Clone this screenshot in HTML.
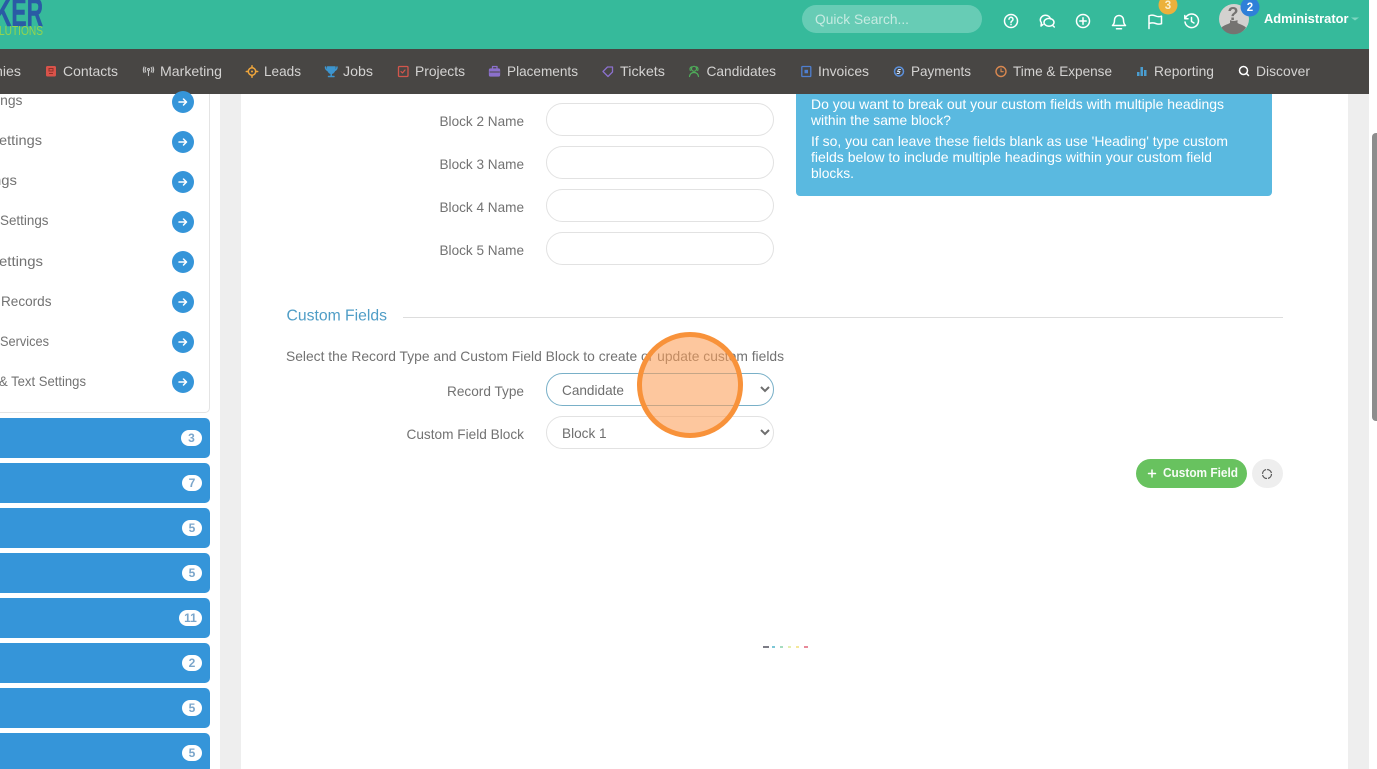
<!DOCTYPE html>
<html lang="en">
<head>
<meta charset="utf-8">
<title>Custom Fields</title>
<style>
html,body{margin:0;padding:0;width:1377px;height:769px;overflow:hidden;background:#fff;font-family:"Liberation Sans",sans-serif}
.a{position:absolute}
#stage{position:relative;width:1377px;height:769px;overflow:hidden}
input,select{position:absolute;left:546px;width:228px;height:33px;box-sizing:border-box;border:1px solid #e2e2e2;border-radius:17px;background:#fff;color:#6e6e6e;font:13.6px "Liberation Sans",sans-serif;padding:1px 6px 0 11px;margin:0;outline:0}
svg{position:absolute;left:0;top:0}
text{font-family:"Liberation Sans",sans-serif}
.bar{position:absolute;left:-10px;width:220px;height:40px;background:#3595d9;border-radius:5px}
</style>
</head>
<body>
<div id="stage">
<div class="a" style="left:220px;top:94px;width:21px;height:675px;background:#eeeeee"></div>
<div class="a" style="left:1348px;top:94px;width:21px;height:675px;background:#eeeeee"></div>
<div class="a" style="left:1372px;top:133px;width:5px;height:288px;background:#8d8d8d;border-radius:4px 0 0 4px"></div>
<div class="a" style="left:-10px;top:80px;width:218px;height:331px;background:#fff;border:1px solid #e4e4e4;border-radius:5px"></div>
<div class="bar" style="top:418px"></div>
<div class="bar" style="top:463px"></div>
<div class="bar" style="top:508px"></div>
<div class="bar" style="top:553px"></div>
<div class="bar" style="top:598px"></div>
<div class="bar" style="top:643px"></div>
<div class="bar" style="top:688px"></div>
<div class="bar" style="top:733px"></div>

<div class="a" style="left:796px;top:80px;width:476px;height:116px;background:#5ab9e0;border-radius:4px"></div>

<input type="text" style="top:103px">
<input type="text" style="top:146px">
<input type="text" style="top:189px">
<input type="text" style="top:232px">
<select style="top:373px;border-color:#79b0c8"><option>Candidate</option></select>
<select style="top:416px"><option>Block 1</option></select>

<div class="a" style="left:1136px;top:459px;width:111px;height:29px;background:#68c25f;border-radius:15px"></div>
<div class="a" style="left:1252px;top:459px;width:31px;height:29px;background:#eeeeee;border-radius:15px"></div>
<div class="a" style="left:403px;top:317px;width:880px;height:1px;background:#dddddd"></div>

<div class="a" style="left:0;top:0;width:1369px;height:49px;background:#36ba9b"></div>
<div class="a" style="left:0;top:49px;width:1369px;height:45px;background:#484644"></div>
<div class="a" style="left:802px;top:5px;width:180px;height:28px;background:#67ccb5;border-radius:14px"></div>

<svg width="1377" height="769" viewBox="0 0 1377 769" xmlns="http://www.w3.org/2000/svg">
<!-- logo -->
<text x="-5" y="26" font-size="40" font-weight="700" fill="#2a5ba5" stroke="#2a5ba5" stroke-width=".6" textLength="48" lengthAdjust="spacingAndGlyphs">KER</text>
<text x="-1" y="35" font-size="12.500" fill="#93d44f" textLength="44" lengthAdjust="spacingAndGlyphs">LUTIONS</text>

<!-- top search + user -->
<text x="815" y="24" font-size="14" fill="#c6ebe2" textLength="94" lengthAdjust="spacingAndGlyphs">Quick Search...</text>
<g fill="none" stroke="#fff" stroke-width="1.500" stroke-linecap="round" stroke-linejoin="round">
  <circle cx="1011" cy="21" r="6.500"/>
  <path d="M1009 19.200a2 2 0 1 1 3 1.800c-.7.400-1 .8-1 1.500"/><path d="M1011 24.400v.2"/>
  <path d="M1043 24.500l-2 1.500.4-3.200c-.8-1-1.100-1.800-1.100-2.800 0-2.700 2.400-4.700 5.200-4.700 2.500 0 4.500 1.500 5 3.600"/>
  <ellipse cx="1049" cy="22.300" rx="5" ry="3.900"/>
  <path d="M1052.500 25.300l1.800 1.700"/>
  <circle cx="1083" cy="21" r="6.500"/>
  <path d="M1083 17.800v6.400M1079.800 21h6.400"/>
  <path d="M1112.500 25.500c1.500-1.200 2-2.500 2-5.500a4.500 4.500 0 0 1 9 0c0 3 .5 4.300 2 5.500z"/>
  <path d="M1116.500 28.800h5"/>
  <path d="M1149 28.500V15.800c2.800-1.300 5-.6 6.700.2s3.300 1 5.800.2v7.500c-2.500.9-4 .5-5.800-.2s-3.900-1-6.700 0"/>
  <path d="M1185.500 18a6.800 6.800 0 1 1-.5 4"/><path d="M1184.800 15.500v3.200h3.200"/>
  <path d="M1191.500 17.500v4l2.500 1.500"/>
</g>
<circle cx="1168" cy="5" r="9.500" fill="#ecb13c"/>
<text x="1168" y="9" font-size="11.500" font-weight="700" fill="#fbeecb" text-anchor="middle">3</text>
<circle cx="1234" cy="19" r="15" fill="#d3d1cf"/>
<path d="M1221.500 27.500c2.500-2.500 6-3 8.500-4.500v-3c1.500 1.200 6 1.200 7.500 0v3c2.500 1.500 6 2 8.500 4.500-5.500 9-19 9-24.500 0z" fill="#757371"/>
<text x="1233" y="20" font-size="18" font-weight="700" fill="#757371" text-anchor="middle">?</text>
<circle cx="1250" cy="7" r="9.500" fill="#2f80d8"/>
<text x="1250" y="11" font-size="11.500" font-weight="700" fill="#fff" text-anchor="middle">2</text>
<text x="1264" y="23" font-size="13" font-weight="700" fill="#fff" textLength="84.500" lengthAdjust="spacingAndGlyphs">Administrator</text>
<path d="M1351 17.500h8l-4 3z" fill="#7fd6c1"/>

<!-- nav text -->
<g font-size="14" fill="#d4d3d2">
<text x="-5" y="76" textLength="26" lengthAdjust="spacingAndGlyphs">hies</text>
<text x="63" y="76" textLength="55" lengthAdjust="spacingAndGlyphs">Contacts</text>
<text x="160" y="76" textLength="62" lengthAdjust="spacingAndGlyphs">Marketing</text>
<text x="264" y="76" textLength="37" lengthAdjust="spacingAndGlyphs">Leads</text>
<text x="343" y="76" textLength="30" lengthAdjust="spacingAndGlyphs">Jobs</text>
<text x="415" y="76" textLength="50" lengthAdjust="spacingAndGlyphs">Projects</text>
<text x="507" y="76" textLength="71" lengthAdjust="spacingAndGlyphs">Placements</text>
<text x="620" y="76" textLength="45" lengthAdjust="spacingAndGlyphs">Tickets</text>
<text x="706.500" y="76" textLength="69.500" lengthAdjust="spacingAndGlyphs">Candidates</text>
<text x="818" y="76" textLength="51" lengthAdjust="spacingAndGlyphs">Invoices</text>
<text x="911" y="76" textLength="60" lengthAdjust="spacingAndGlyphs">Payments</text>
<text x="1013" y="76" textLength="99" lengthAdjust="spacingAndGlyphs">Time &amp; Expense</text>
<text x="1154" y="76" textLength="60" lengthAdjust="spacingAndGlyphs">Reporting</text>
<text x="1256" y="76" textLength="54" lengthAdjust="spacingAndGlyphs">Discover</text>
</g>
<!-- nav icons -->
<rect x="46" y="66" width="10" height="10.500" rx="1.500" fill="#d9534a"/>
<path d="M49 68.500h4v2.500h-4zM49 73.500h4" stroke="#8f3029" stroke-width="1" fill="none"/>
<g fill="none" stroke-linecap="round" stroke-linejoin="round">
  <g stroke="#c9c9c9" stroke-width="1.100">
    <circle cx="148.500" cy="69.500" r="1"/><path d="M148.500 71v4.500M145.800 67.500c-1 1.500-1 3 0 4.500M151.200 67.500c1 1.500 1 3 0 4.500M144 67c-1 2-1 3.500 0 5.500M153 67c1 2 1 3.500 0 5.500"/>
  </g>
  <g stroke="#f0a63c" stroke-width="1.500">
    <circle cx="252" cy="71.500" r="3.700"/><path d="M252 65.800v2M252 75.200v2M246.300 71.500h2M255.700 71.500h2"/>
  </g>
  <circle cx="252" cy="71.500" r="1" fill="#f0a63c"/>
  <g stroke="#3d95cf" stroke-width="1.500">
    <path d="M327.500 67h7.500c0 4-1 6-3.700 6.500-2.800-.5-3.800-2.500-3.800-6.500z" fill="#3d95cf"/>
    <path d="M325.500 67c0 2 .7 3 2.500 3.500M337 67c0 2-.7 3-2.500 3.500M331.200 73.500V76M328.500 76.500h5.500"/>
  </g>
  <rect x="398.500" y="66.500" width="9.500" height="10" rx="1" stroke="#d3564c" stroke-width="1.300"/>
  <path d="M401 71.500l1.500 1.500 2.500-3" stroke="#d3564c" stroke-width="1.200"/>
  <g stroke="#8b70cc" stroke-width="1.300">
    <rect x="489.500" y="69" width="10" height="7" rx="1" fill="#8b70cc"/>
    <path d="M492.500 69v-2.500h4.500v2.500"/>
  </g>
  <path d="M490 72h9.500" stroke="#484644" stroke-width="1"/>
  <path d="M603 71.500l4.500-4.500h5v5l-4.500 4.500z" stroke="#8b70cc" stroke-width="1.300"/>
  <g stroke="#4fae5a" stroke-width="1.200">
    <circle cx="694" cy="68.800" r="2.500"/>
    <path d="M689.500 76.500c.5-3 2.300-4 4.500-4s4 1 4.500 4"/>
    <path d="M690.300 70.500c-1-2 .3-3.500 1.300-3.700M697.700 70.500c1-2-.3-3.500-1.300-3.700"/>
  </g>
  <rect x="801.800" y="66.500" width="9" height="10" rx=".8" stroke="#4f7fd0" stroke-width="1.300"/>
  <rect x="804.500" y="69.800" width="3.500" height="3.500" fill="#4f7fd0"/>
  <circle cx="899" cy="71.500" r="4.500" stroke="#5b90dc" stroke-width="1.500"/>
  <path d="M900.500 69.500h-2l-1 2h2.500l-1 2h-2" stroke="#cfe0f6" stroke-width=".9"/>
  <circle cx="1001" cy="71.500" r="5" stroke="#d98850" stroke-width="1.400"/>
  <path d="M1001 68.800v2.900h2.200" stroke="#d98850" stroke-width="1.100"/>
  <circle cx="1243.500" cy="70.500" r="4" stroke="#fff" stroke-width="1.500"/>
  <path d="M1246.500 73.500l2 2" stroke="#fff" stroke-width="1.500"/>
</g>
<g fill="#4a9dd0"><rect x="1137" y="72" width="2.500" height="4"/><rect x="1140.500" y="67" width="2.500" height="9"/><rect x="1144" y="70" width="2.500" height="6"/></g>

<!-- sidebar -->
<g font-size="14" fill="#727272">
<text x="-3" y="105" textLength="25.500" lengthAdjust="spacingAndGlyphs">ings</text>
<text x="-1" y="145" textLength="43" lengthAdjust="spacingAndGlyphs">ettings</text>
<text x="-7" y="185" textLength="24" lengthAdjust="spacingAndGlyphs">ngs</text>
<text x="0" y="225" textLength="48.500" lengthAdjust="spacingAndGlyphs">Settings</text>
<text x="-1" y="266" textLength="44" lengthAdjust="spacingAndGlyphs">ettings</text>
<text x="1" y="306" textLength="50.500" lengthAdjust="spacingAndGlyphs">Records</text>
<text x="0" y="346" textLength="49" lengthAdjust="spacingAndGlyphs">Services</text>
<text x="-1" y="386" textLength="87" lengthAdjust="spacingAndGlyphs">&amp; Text Settings</text>
</g>
<g id="arrows">
<circle cx="183" cy="102" r="11" fill="#3595d9"/><circle cx="183" cy="142" r="11" fill="#3595d9"/><circle cx="183" cy="182" r="11" fill="#3595d9"/><circle cx="183" cy="222" r="11" fill="#3595d9"/><circle cx="183" cy="262" r="11" fill="#3595d9"/><circle cx="183" cy="302" r="11" fill="#3595d9"/><circle cx="183" cy="342" r="11" fill="#3595d9"/><circle cx="183" cy="382" r="11" fill="#3595d9"/>
<g fill="none" stroke="#fff" stroke-width="1.500" stroke-linecap="round" stroke-linejoin="round">
<path d="M179 102h7.500M183.500 99l3 3-3 3"/><path d="M179 142h7.500M183.500 139l3 3-3 3"/><path d="M179 182h7.500M183.500 179l3 3-3 3"/><path d="M179 222h7.500M183.500 219l3 3-3 3"/><path d="M179 262h7.500M183.500 259l3 3-3 3"/><path d="M179 302h7.500M183.500 299l3 3-3 3"/><path d="M179 342h7.500M183.500 339l3 3-3 3"/><path d="M179 382h7.500M183.500 379l3 3-3 3"/>
</g>
</g>
<!-- badges -->
<g fill="#fff">
<rect x="181" y="430" width="21" height="16" rx="8"/>
<rect x="182" y="475" width="20" height="16" rx="8"/>
<rect x="182" y="520" width="20" height="16" rx="8"/>
<rect x="182" y="565" width="20" height="16" rx="8"/>
<rect x="179" y="610" width="23" height="16" rx="8"/>
<rect x="182" y="655" width="20" height="16" rx="8"/>
<rect x="182" y="700" width="20" height="16" rx="8"/>
<rect x="182" y="745" width="20" height="16" rx="8"/>
</g>
<g font-size="12" font-weight="700" fill="#7ba6cb" text-anchor="middle">
<text x="191.500" y="442">3</text>
<text x="192" y="487">7</text>
<text x="192" y="532">5</text>
<text x="192" y="577">5</text>
<text x="190.500" y="622">11</text>
<text x="192" y="667">2</text>
<text x="192" y="712">5</text>
<text x="192" y="757">5</text>
</g>

<!-- info box -->
<g font-size="14" fill="#fff">
<text x="811" y="109" textLength="413" lengthAdjust="spacingAndGlyphs">Do you want to break out your custom fields with multiple headings</text>
<text x="811" y="125" textLength="140" lengthAdjust="spacingAndGlyphs">within the same block?</text>
<text x="811" y="146" textLength="417" lengthAdjust="spacingAndGlyphs">If so, you can leave these fields blank as use 'Heading' type custom</text>
<text x="811" y="162" textLength="401" lengthAdjust="spacingAndGlyphs">fields below to include multiple headings within your custom field</text>
<text x="811" y="178" textLength="43" lengthAdjust="spacingAndGlyphs">blocks.</text>
</g>

<!-- labels -->
<g font-size="14" fill="#727272">
<text x="439.500" y="126" textLength="84.500" lengthAdjust="spacingAndGlyphs">Block 2 Name</text>
<text x="439.500" y="169" textLength="84.500" lengthAdjust="spacingAndGlyphs">Block 3 Name</text>
<text x="439.500" y="212" textLength="84.500" lengthAdjust="spacingAndGlyphs">Block 4 Name</text>
<text x="439.500" y="255" textLength="84.500" lengthAdjust="spacingAndGlyphs">Block 5 Name</text>
<text x="286" y="361" textLength="498" lengthAdjust="spacingAndGlyphs">Select the Record Type and Custom Field Block to create or update custom fields</text>
<text x="447" y="396" textLength="77" lengthAdjust="spacingAndGlyphs">Record Type</text>
<text x="406.500" y="439" textLength="117.500" lengthAdjust="spacingAndGlyphs">Custom Field Block</text>
</g>
<text x="286.500" y="320.500" font-size="16" fill="#4f9dc6" textLength="100.500" lengthAdjust="spacingAndGlyphs">Custom Fields</text>

<!-- button -->
<path d="M1148.500 473.500h7M1152 470v7" stroke="#fff" stroke-width="1.500" stroke-linecap="round"/>
<text x="1163" y="477" font-size="12.500" font-weight="700" fill="#f7fcf6" textLength="75" lengthAdjust="spacingAndGlyphs">Custom Field</text>
<circle cx="1267" cy="474" r="4.500" fill="none" stroke="#555" stroke-width="1.200" stroke-dasharray="6 1.070"/>

<!-- loader -->
<g>
<rect x="763" y="646" width="6" height="2" fill="#7c7c86"/>
<rect x="772" y="646" width="3" height="2" fill="#7cc7d6"/>
<rect x="780" y="646" width="3" height="2" fill="#a6dcc0"/>
<rect x="788" y="646" width="3" height="2" fill="#e6efb0"/>
<rect x="796" y="646" width="3" height="2" fill="#f5e79a"/>
<rect x="804" y="646" width="4" height="2" fill="#e88a9a"/>
</g>

<!-- highlight -->
<circle cx="690" cy="385" r="50.500" fill="#fb9e58" fill-opacity=".58" stroke="#f8923a" stroke-width="5"/>
</svg>
</div>
</body>
</html>
